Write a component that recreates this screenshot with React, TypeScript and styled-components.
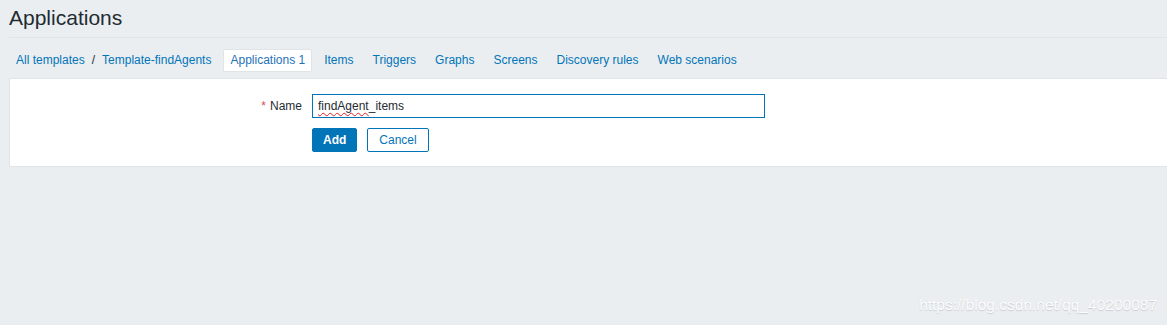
import React from 'react';
import styled, { createGlobalStyle } from 'styled-components';

const GlobalStyle = createGlobalStyle`
  html, body {
    margin: 0;
    padding: 0;
    background: #ebeef1;
    font-family: Arial, "Liberation Sans", sans-serif;
    font-size: 12px;
    color: #1f2c33;
  }
`;

const Page = styled.div`
  position: relative;
  height: 325px;
  padding: 0 0 0 9px;
  box-sizing: border-box;
  overflow: hidden;
`;

const Header = styled.div`
  height: 37px;
  border-bottom: 1px solid #dfe4e7;
  display: flex;
  align-items: center;
`;

const Title = styled.h1`
  margin: 0;
  font-size: 21px;
  font-weight: normal;
  color: #1f2c33;
  position: relative;
  top: -1px;
`;

const Nav = styled.ul`
  list-style: none;
  margin: 0;
  padding: 11px 0 0 0;
  display: flex;
  align-items: center;
  height: 22px;
`;

const Crumb = styled.li`
  display: flex;
  align-items: center;
  color: #0275b8;
  padding: 0 12px 0 7px;
  font-size: 12px;
`;

const Sep = styled.span`
  color: #1f2c33;
  margin: 0 7px;
`;

const Tab = styled.li<{ $active?: boolean }>`
  font-size: 12px;
  padding: 3px 6px 4px;
  margin-right: 5px;
  background: ${(p) => (p.$active ? '#ffffff' : 'transparent')};
  border: 1px solid ${(p) => (p.$active ? '#dfe4e7' : 'transparent')};
  border-radius: 2px;
  color: ${(p) => (p.$active ? '#1f72b8' : '#0275b8')};
`;

const Panel = styled.div`
  margin-top: 7px;
  background: #ffffff;
  border: 1px solid #dfe4e7;
  border-right: none;
  height: 89px;
  box-sizing: border-box;
  padding-top: 15px;
`;

const Row = styled.div`
  display: grid;
  grid-template-columns: 292px 453px;
  column-gap: 10px;
  align-items: center;
  margin-bottom: 10px;
`;

const Label = styled.label`
  text-align: right;
  font-size: 12px;
  color: #1f2c33;
`;

const Star = styled.span`
  color: #d64e4e;
  margin-right: 4px;
`;

const Input = styled.div`
  height: 24px;
  box-sizing: border-box;
  border: 1px solid #0275b8;
  padding: 0 5px;
  display: flex;
  align-items: center;
  font-size: 12px;
  color: #1f2c33;
`;

const Misspelled = styled.span`
  text-decoration: underline wavy #e02020;
  text-decoration-thickness: 1px;
  text-underline-offset: 2px;
`;

const Buttons = styled.div`
  grid-column: 2;
  display: flex;
  gap: 10px;
`;

const Button = styled.button<{ $primary?: boolean }>`
  height: 24px;
  box-sizing: border-box;
  padding: 0 ${(p) => (p.$primary ? '10px' : '11px')};
  font-family: Arial, "Liberation Sans", sans-serif;
  font-size: 12px;
  font-weight: ${(p) => (p.$primary ? 'bold' : 'normal')};
  border-radius: 2px;
  border: 1px solid #0275b8;
  background: ${(p) => (p.$primary ? '#0275b8' : '#ffffff')};
  color: ${(p) => (p.$primary ? '#ffffff' : '#0275b8')};
  cursor: pointer;
`;

const Watermark = styled.div`
  position: absolute;
  right: 10px;
  bottom: 11px;
  font-size: 15.5px;
  color: #fbfcfd;
  text-shadow: 0 1px 1px #c7cbcf;
  font-family: Arial, "Liberation Sans", sans-serif;
`;

const tabs = ['Items', 'Triggers', 'Graphs', 'Screens', 'Discovery rules', 'Web scenarios'];

export default function App() {
  return (
    <>
      <GlobalStyle />
      <Page>
        <Header>
          <Title>Applications</Title>
        </Header>
        <Nav>
          <Crumb>
            All templates<Sep>/</Sep>Template-findAgents
          </Crumb>
          <Tab $active>Applications 1</Tab>
          {tabs.map((t) => (
            <Tab key={t}>{t}</Tab>
          ))}
        </Nav>
        <Panel>
          <Row>
            <Label>
              <Star>*</Star>Name
            </Label>
            <Input>
              <Misspelled>findAgent</Misspelled>_items
            </Input>
          </Row>
          <Row>
            <Buttons>
              <Button $primary>Add</Button>
              <Button>Cancel</Button>
            </Buttons>
          </Row>
        </Panel>
        <Watermark>https://blog.csdn.net/qq_40200087</Watermark>
      </Page>
    </>
  );
}
